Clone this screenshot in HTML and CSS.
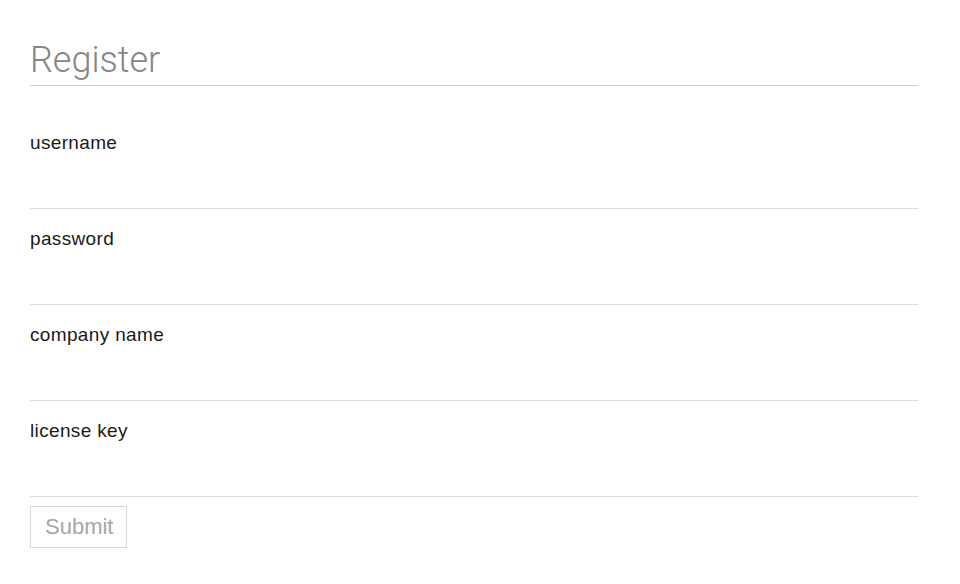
FILE: index.html
```html
<!DOCTYPE html>
<html lang="en">
<head>
    <meta charset="UTF-8">
    <meta name="viewport" content="width=device-width, initial-scale=1.0">
    <title>Register</title>
    <link rel="stylesheet" href="styles.css">
</head>
<body>
    <main class="register">
        <h1 class="register-title">Register</h1>
        <form class="register-form" onsubmit="return false">
            <div class="field">
                <label for="username">username</label>
                <input type="text" id="username" name="username">
            </div>
            <div class="field">
                <label for="password">password</label>
                <input type="password" id="password" name="password">
            </div>
            <div class="field">
                <label for="company">company name</label>
                <input type="text" id="company" name="company">
            </div>
            <div class="field">
                <label for="license">license key</label>
                <input type="text" id="license" name="license">
            </div>
            <button type="submit" class="submit">Submit</button>
        </form>
    </main>
</body>
</html>
```

FILE: styles.css
```css
* {
    box-sizing: border-box;
    margin: 0;
    padding: 0;
}

body {
    background-color: #fff;
    font-family: "Liberation Sans", Arial, sans-serif;
    color: #1a1a1a;
}

.register {
    padding: 39px 42px 0 30px;
}

.register-title {
    font-family: Roboto, "Liberation Sans", sans-serif;
    font-weight: 300;
    font-size: 36px;
    line-height: 42px;
    color: #858585;
    padding-bottom: 4px;
    border-bottom: 1px solid #b8d0ef;
    margin-bottom: 27px;
}

.field {
    display: flex;
    flex-direction: column;
    padding-top: 19px;
    border-bottom: 1px solid #dcdcdc;
}

.field label {
    font-size: 19px;
    line-height: 22px;
    letter-spacing: 0.35px;
    color: #1a1a1a;
}

.field input {
    height: 54px;
    border: none;
    outline: none;
    background: transparent;
    font-family: inherit;
    font-size: 19px;
}

.submit {
    margin-top: 9px;
    height: 42px;
    padding: 0 13px 0 14px;
    background: #fff;
    border: 1px solid #d8d8d8;
    color: #a6a6a6;
    font-family: "Liberation Sans", Arial, sans-serif;
    font-size: 22px;
    cursor: pointer;
}
```
